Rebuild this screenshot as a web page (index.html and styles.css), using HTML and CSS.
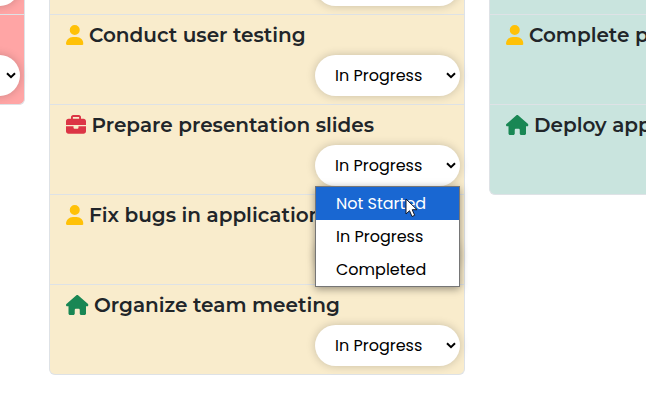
FILE: index.html
```html
<!DOCTYPE html>
<html lang="en">
<head>
<meta charset="utf-8">
<title>Tasks</title>
<link rel="stylesheet" href="styles.css">
</head>
<body>
<svg class="defs" aria-hidden="true">
  <symbol id="user" viewBox="0 0 448 512"><path d="M224 256A128 128 0 1 0 224 0a128 128 0 1 0 0 256zm-45.7 48C79.8 304 0 383.8 0 482.3C0 498.7 13.3 512 29.7 512H418.3c16.4 0 29.7-13.3 29.7-29.7C448 383.8 368.2 304 269.7 304H178.3z"/></symbol>
  <symbol id="briefcase" viewBox="0 0 512 512"><path d="M184 48H328c4.400 0 8 3.600 8 8V96H176V56c0-4.400 3.600-8 8-8zm-56 8V96H64C28.700 96 0 124.700 0 160v96H192 320 512V160c0-35.300-28.700-64-64-64H384V56c0-30.900-25.100-56-56-56H184c-30.900 0-56 25.100-56 56zM512 288H320v32c0 17.700-14.300 32-32 32H224c-17.700 0-32-14.300-32-32V288H0V416c0 35.300 28.700 64 64 64H448c35.300 0 64-28.700 64-64V288z"/></symbol>
  <symbol id="house" viewBox="0 0 576 512"><path d="M575.8 255.500c0 18-15 32.100-32 32.100h-32l.7 160.200c0 2.700-.2 5.400-.5 8.100V472c0 22.100-17.900 40-40 40H456c-1.100 0-2.200 0-3.300-.1c-1.400 .1-2.800 .1-4.200 .1H416 392c-22.100 0-40-17.900-40-40V448 384c0-17.700-14.300-32-32-32H256c-17.700 0-32 14.300-32 32v64 24c0 22.100-17.900 40-40 40H160 128.100c-1.500 0-3-.1-4.500-.2c-1.200 .1-2.400 .2-3.600 .2H104c-22.100 0-40-17.900-40-40V360c0-.9 0-1.900 .1-2.800V287.600H32c-18 0-32-14-32-32.100c0-9 3-17 10-24L266.400 8c7-7 15-8 22-8s15 2 21 7L564.800 231.500c8 7 12 15 11 24z"/></symbol>
  <symbol id="chevron" viewBox="0 0 10 7"><path d="M1 1.200L5 5.200L9 1.200" fill="none" stroke="#000" stroke-width="2"/></symbol>
</svg>
<main class="board">
  <section class="column not-started">
    <div class="task"><div class="select"><svg class="chevron"><use href="#chevron"/></svg></div></div>
    <div class="task"><div class="select"><svg class="chevron"><use href="#chevron"/></svg></div></div>
  </section>
  <section class="column in-progress">
    <div class="task"><div class="select"></div></div>
    <div class="task">
      <h2 class="title"><svg class="icon user"><use href="#user"/></svg>Conduct user testing</h2>
      <div class="select"><span>In Progress</span><svg class="chevron"><use href="#chevron"/></svg></div>
    </div>
    <div class="task">
      <h2 class="title"><svg class="icon briefcase"><use href="#briefcase"/></svg>Prepare presentation slides</h2>
      <div class="select"><span>In Progress</span><svg class="chevron"><use href="#chevron"/></svg>
        <ul class="menu"><li class="active">Not Started</li><li>In Progress</li><li>Completed</li></ul>
        <svg class="cursor" viewBox="0 0 13 20"><path d="M1 1V16L4.500 12.700L7 18.500L9.700 17.300L7.200 11.700H12Z" fill="#fff" stroke="#111a2c" stroke-width="1"/></svg>
      </div>
    </div>
    <div class="task">
      <h2 class="title"><svg class="icon user"><use href="#user"/></svg>Fix bugs in application</h2>
      <div class="select"></div>
    </div>
    <div class="task">
      <h2 class="title"><svg class="icon house"><use href="#house"/></svg>Organize team meeting</h2>
      <div class="select"><span>In Progress</span><svg class="chevron"><use href="#chevron"/></svg></div>
    </div>
  </section>
  <section class="column completed">
    <div class="task"></div>
    <div class="task">
      <h2 class="title"><svg class="icon user"><use href="#user"/></svg>Complete project</h2>
    </div>
    <div class="task">
      <h2 class="title"><svg class="icon house"><use href="#house"/></svg>Deploy application</h2>
    </div>
  </section>
</main>
</body>
</html>
```
FILE: styles.css
```css
* { box-sizing: border-box; }
body { margin: 0; height: 413px; overflow: hidden; background: #fff; color: #212529; }
.defs { position: absolute; width: 0; height: 0; }
.board { display: flex; align-items: flex-start; gap: 24px; width: 1296px; margin: -76px 0 0 -391px; }
.column { flex: 0 0 416px; border: 1px solid #dee2e6; border-top: 0; border-radius: 6px; }
.not-started { background: #ffa5a5; }
.in-progress { background: #f9eccc; }
.completed { background: #c9e4de; }
.task { display: flex; flex-direction: column; justify-content: space-between; height: 90px; padding: 8px 16px; border-top: 1px solid #dee2e6; }
.title { display: flex; align-items: center; height: 24px; margin: 0; font: 600 20px/24px Montserrat, Inter, sans-serif; white-space: nowrap; }
.icon { flex: none; height: 20px; margin-right: 5.5px; }
.user { width: 17.5px; fill: #ffc107; }
.briefcase { width: 20px; fill: #dc3545; }
.house { width: 22.5px; fill: #198754; }
.select { position: relative; display: flex; align-items: center; justify-content: space-between; width: 145px; height: 41px; margin: auto -12px 0 auto; padding: 0 4px 0 20px; border-radius: 21px; background: #fff; box-shadow: 0 0 10px rgba(0, 0, 0, .2); color: #000; font: 400 16px/24px Poppins, Inter, sans-serif; }
.chevron { width: 10px; height: 7px; margin-left: auto; }
.menu { position: absolute; z-index: 2; top: 41px; left: 0; width: 145px; margin: 0; padding: 0; border: 1px solid #767676; background: #fff; box-shadow: 0 2px 8px rgba(0, 0, 0, .4); list-style: none; }
.menu li { height: 33px; padding-left: 20px; line-height: 33px; }
.menu .active { background: #1967d2; color: #fff; }
.cursor { position: absolute; z-index: 3; top: 53px; left: 90px; width: 13px; height: 20px; }
```
